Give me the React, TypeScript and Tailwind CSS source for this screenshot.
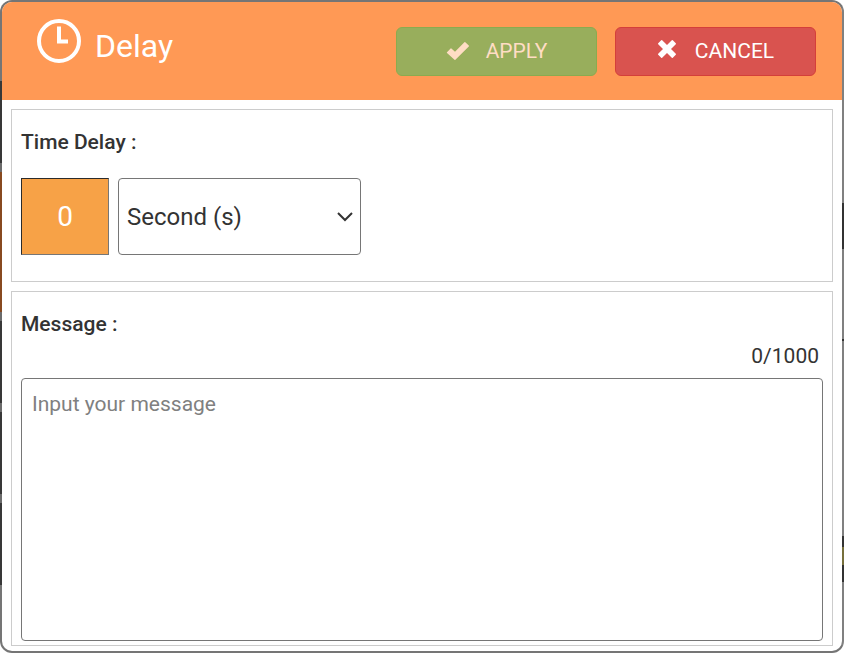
import React, { useState } from "react";

const MAX_LENGTH = 1000;

const ClockIcon: React.FC = () => (
    <svg className="size-11 shrink-0" viewBox="0 0 44 44" fill="none" stroke="currentColor" aria-hidden="true">
        <circle cx="22" cy="22" r="20" strokeWidth="4" />
        <path d="M22 7.5V22.5H31" strokeWidth="4" />
    </svg>
);

const CheckIcon: React.FC = () => (
    <svg className="w-6 h-5" viewBox="0 0 24 20" fill="currentColor" aria-hidden="true">
        <path d="M1 11.2L4.6 7.4Q5 7 5.4 7.4L9 10.8L18.4 1.3Q18.9 .9 19.3 1.3L22.8 4.6Q23.2 5 22.8 5.4L9.4 18.8Q8.9 19.2 8.5 18.8L1 12Q.6 11.6 1 11.2Z" />
    </svg>
);

const CrossIcon: React.FC = () => (
    <svg className="w-5 h-6" viewBox="0 0 20 24" fill="currentColor" aria-hidden="true">
        <path d="M1.2 4.2L4.2 1.2Q4.7 .8 5.2 1.2L10 6L14.8 1.2Q15.3 .8 15.8 1.2L18.8 4.2Q19.2 4.7 18.8 5.2L14 10L18.8 14.8Q19.2 15.3 18.8 15.8L15.8 18.8Q15.3 19.2 14.8 18.8L10 14L5.2 18.8Q4.7 19.2 4.2 18.8L1.2 15.8Q.8 15.3 1.2 14.8L6 10L1.2 5.2Q.8 4.7 1.2 4.2Z" />
    </svg>
);

const App: React.FC = () => {
    const [delay, setDelay] = useState("0");
    const [unit, setUnit] = useState("second");
    const [message, setMessage] = useState("");

    return (
        <div className="flex min-h-screen p-0.5 rounded-xl bg-[#757575] bg-[linear-gradient(#757575_81px,#383838_81px_163px,#6b6b6b_163px_172px,#884a20_172px_312px,#6b6b6b_312px_321px,#383838_321px_403px,#6b6b6b_403px_412px,#383838_412px_494px,#6b6b6b_494px_503px,#383838_503px_585px,#757575_585px),linear-gradient(#808080_203px,#333_203px_249px,#808080_249px_339px,#333_339px_341px,#808080_341px_536px,#333_536px_547px,#77703c_547px_565px,#333_565px_582px,#808080_582px)] bg-[length:2px_100%] bg-[position:left_top,right_top] bg-no-repeat font-[Roboto,sans-serif] text-[#333]">
            <div className="flex flex-1 flex-col rounded-[10px] bg-white overflow-hidden">
                <header className="flex items-start justify-between pl-[35px] pr-[26px] pt-[17px] h-[98px] bg-[#ff9955] text-white">
                    <div className="flex items-start gap-3.5">
                        <ClockIcon />
                        <h1 className="pt-[7px] text-[32px] leading-10">Delay</h1>
                    </div>
                    <div className="flex gap-[18px] pt-2">
                        <button type="button" disabled className="flex items-center justify-center gap-4 w-[201px] h-[49px] pb-px rounded-md border border-[#8aab4f] bg-[#98ae5c] text-[#ffddc4] text-[21px] leading-7">
                            <CheckIcon />
                            APPLY
                        </button>
                        <button type="button" className="flex items-center justify-center gap-[18px] w-[201px] h-[49px] pb-px rounded-md border border-[#d43f3a] bg-[#d9534f] text-[21px] leading-7">
                            <CrossIcon />
                            CANCEL
                        </button>
                    </div>
                </header>

                <main className="flex flex-1 flex-col gap-[9px] px-[9px] pt-[9px] pb-[5px]">
                    <section className="px-[9px] pt-[18px] pb-[26px] border border-[#ccc]">
                        <label htmlFor="delay" className="block text-[21px] leading-7 font-medium">Time Delay :</label>
                        <div className="flex items-center gap-[9px] pt-[22px]">
                            <input
                                id="delay"
                                type="text"
                                inputMode="numeric"
                                value={delay}
                                onChange={(e) => setDelay(e.target.value)}
                                className="w-[88px] h-[77px] border border-[#767676] border-t-[#2b2b2b] border-l-[#2b2b2b] bg-[#f7a247] text-center text-[28px] text-white"
                            />
                            <div className="relative">
                                <select
                                    aria-label="Time unit"
                                    value={unit}
                                    onChange={(e) => setUnit(e.target.value)}
                                    className="w-[243px] h-[77px] pl-2 pr-8 appearance-none rounded-[4px] border border-[#767676] bg-white text-2xl"
                                >
                                    <option value="second">Second (s)</option>
                                    <option value="minute">Minute (s)</option>
                                    <option value="hour">Hour (s)</option>
                                </select>
                                <svg className="absolute right-2 top-[34px] w-4 h-2.5 pointer-events-none" viewBox="0 0 16 10" fill="none" stroke="currentColor" aria-hidden="true">
                                    <path d="M1 1L8 8L15 1" strokeWidth="2" />
                                </svg>
                            </div>
                        </div>
                    </section>

                    <section className="flex flex-1 flex-col px-[9px] pt-[18px] pb-1 border border-[#ccc]">
                        <label htmlFor="message" className="text-[21px] leading-7 font-medium">Message :</label>
                        <p className="pt-1 pr-1 text-right text-[21px] leading-7">{message.length}/{MAX_LENGTH}</p>
                        <textarea
                            id="message"
                            maxLength={MAX_LENGTH}
                            placeholder="Input your message"
                            value={message}
                            onChange={(e) => setMessage(e.target.value)}
                            className="flex-1 mt-2 px-2.5 py-[11px] resize-none rounded-[4px] border border-[#767676] text-[21px] leading-7 placeholder:text-[#808080]"
                        />
                    </section>
                </main>
            </div>
        </div>
    );
};

export default App;
